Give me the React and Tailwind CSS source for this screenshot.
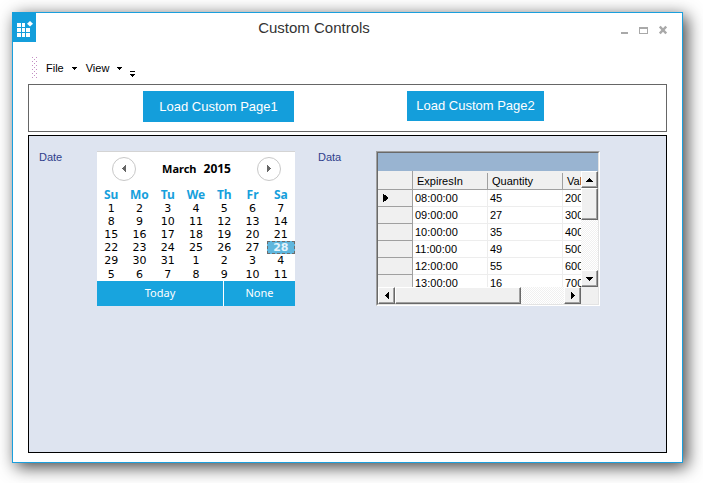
import React from "react";

const DAYS = ["Su", "Mo", "Tu", "We", "Th", "Fr", "Sa"];
const WEEKS = [
  [1, 2, 3, 4, 5, 6, 7],
  [8, 9, 10, 11, 12, 13, 14],
  [15, 16, 17, 18, 19, 20, 21],
  [22, 23, 24, 25, 26, 27, 28],
  [29, 30, 31, 1, 2, 3, 4],
  [5, 6, 7, 8, 9, 10, 11],
];
const ROWS = [
  ["08:00:00", 45, 200],
  ["09:00:00", 27, 300],
  ["10:00:00", 35, 400],
  ["11:00:00", 49, 500],
  ["12:00:00", 55, 600],
  ["13:00:00", 16, 700],
];

function Logo() {
  return (
    <svg viewBox="0 0 24 30" className="block h-[30px] w-6 shrink-0 bg-[#149edb]" aria-hidden="true">
      <g fill="#fff">
        <path d="M5 11h4v4H5zM10 11h3v4h-3zM5 16h4v4H5zM10 16h3v4h-3zM14 16h4v4h-4zM5 21h4v4H5zM10 21h3v4h-3zM14 21h4v4h-4z" />
        <path d="M18 9l3 2.8-3 2.8-3-2.8z" />
      </g>
    </svg>
  );
}

function WindowButtons() {
  return (
    <div className="flex h-[34px] items-center gap-[11px] pr-2 pt-px text-[#a9a9a9]">
      <button aria-label="Minimize" className="h-3 w-[7px]">
        <svg viewBox="0 0 7 12" className="block h-3 w-[7px]" shapeRendering="crispEdges"><path fill="currentColor" d="M0 8h7v2H0z" /></svg>
      </button>
      <button aria-label="Maximize" className="h-3 w-[9px]">
        <svg viewBox="0 0 9 12" className="block h-3 w-[9px]" shapeRendering="crispEdges"><path fill="currentColor" fillRule="evenodd" d="M0 3h9v7H0zM1 5v4h7V5z" /></svg>
      </button>
      <button aria-label="Close" className="h-3 w-2">
        <svg viewBox="0 0 8 12" className="block h-3 w-2"><path stroke="currentColor" strokeWidth="2.4" d="M.8 2.5l6.4 7M7.2 2.5l-6.4 7" /></svg>
      </button>
    </div>
  );
}

function Grip() {
  return (
    <svg className="h-[22px] w-[6px]" aria-hidden="true" shapeRendering="crispEdges">
      <defs>
        <pattern id="grip" width="4" height="4" patternUnits="userSpaceOnUse">
          <path fill="#c48fc4" d="M0 0h1v1H0zM2 2h1v1H2z" />
        </pattern>
      </defs>
      <rect width="6" height="22" fill="url(#grip)" />
    </svg>
  );
}

function MenuButton({ children }) {
  return (
    <button className="flex items-center gap-2 text-[11px] leading-4 text-black">
      {children}
      <svg viewBox="0 0 5 3" className="h-[3px] w-[5px]" shapeRendering="crispEdges"><path d="M0 0h5v1H0zM1 1h3v1H1zM2 2h1v1H2z" /></svg>
    </button>
  );
}

function Arrow({ d }) {
  return (
    <svg viewBox="0 0 8 8" className="block h-2 w-2" aria-hidden="true" shapeRendering="crispEdges">
      <path d={d} fill="currentColor" />
    </svg>
  );
}

const LEFT = "M5 0h1v7H5zM4 1h1v5H4zM3 2h1v3H3zM2 3h1v1H2z";
const RIGHT = "M2 0h1v7H2zM3 1h1v5H3zM4 2h1v3H4zM5 3h1v1H5z";
const UP = "M0 5h7v1H0zM1 4h5v1H1zM2 3h3v1H2zM3 2h1v1H3z";
const DOWN = "M0 2h7v1H0zM1 3h5v1H1zM2 4h3v1H2zM3 5h1v1H3z";

function Calendar() {
  return (
    <div className="flex w-[198px] flex-col border-t border-[#d4d4d4] bg-white">
      <div className="flex h-[35px] items-center justify-between pl-[15px] pr-[14px] pb-[2px]">
        <button aria-label="Previous month" className="flex size-6 items-center justify-center rounded-full border border-[#c8c8c8] text-[#666]"><Arrow d={LEFT} /></button>
        <div className="flex items-baseline gap-[7px] font-['Noto_Sans',sans-serif] font-bold leading-4 text-black">
          <span className="text-[11px]">March</span>
          <span className="text-[12px]">2015</span>
        </div>
        <button aria-label="Next month" className="flex size-6 items-center justify-center rounded-full border border-[#c8c8c8] text-[#666]"><Arrow d={RIGHT} /></button>
      </div>
      <table aria-label="March 2015" className="w-full table-fixed border-collapse text-center">
        <thead>
          <tr className="h-[15px]">
            {DAYS.map((d) => (
              <th key={d} scope="col" className="p-0 font-['Noto_Sans',sans-serif] text-[12px] font-bold leading-[15px] text-[#16a0dc]">{d}</th>
            ))}
          </tr>
        </thead>
        <tbody className="font-['DejaVu_Sans',sans-serif] text-[11px] leading-[13px] text-black">
          {WEEKS.map((week, i) => (
            <tr key={i} className="h-[13px] last:h-[14px]">
              {week.map((n) =>
                n === 28 ? (
                  <td key={n} aria-selected="true" className="bg-[#5fb6dd] p-0 font-bold text-[#e6f4fb] outline-1 -outline-offset-1 outline-dashed outline-[#6d6d6d]">{n}</td>
                ) : (
                  <td key={n} className="p-0 align-bottom">{n}</td>
                )
              )}
            </tr>
          ))}
        </tbody>
      </table>
      <div className="flex h-[25px] gap-px font-['Noto_Sans',sans-serif] text-[11px] text-white">
        <button className="w-[126px] bg-[#18a4de]">Today</button>
        <button className="flex-1 bg-[#18a4de]">None</button>
      </div>
    </div>
  );
}

const raised = "border border-t-white border-l-white border-r-[#696969] border-b-[#696969] bg-[#f0f0f0] shadow-[inset_-1px_-1px_#a0a0a0]";
const track = "bg-[repeating-conic-gradient(#f0f0f0_0_25%,#fff_0_50%)] bg-[length:2px_2px]";

function ScrollButton({ label, d }) {
  return (
    <button aria-label={label} className={`flex size-[17px] shrink-0 items-center justify-center text-black ${raised}`}>
      <Arrow d={d} />
    </button>
  );
}

function DataGrid() {
  const head = "h-[19px] border-b border-[#a0a0a0] bg-[#f0f0f0] p-0 pt-px text-left font-normal";
  const cell = "h-[17px] border-b border-r border-[#ededed] bg-white px-[2px] pb-0 pt-px leading-[15px]";
  return (
    <div className="w-[224px] border border-t-[#a0a0a0] border-l-[#a0a0a0] border-r-white border-b-white">
      <div className="border border-t-[#696969] border-l-[#696969] border-r-[#e3e3e3] border-b-[#e3e3e3] bg-[#f0f0f0]">
        <div className="h-[18px] bg-[#99b4d1]" />
        <div className="flex h-[116px]">
          <div className="min-w-0 flex-1 overflow-hidden">
            <table className="w-[260px] table-fixed border-separate border-spacing-0 text-[11px] leading-4 text-black">
              <colgroup>
                <col className="w-[35px]" />
                <col className="w-[75px]" />
                <col className="w-[75px]" />
                <col className="w-[75px]" />
              </colgroup>
              <thead>
                <tr>
                  <th aria-label="Row" className={`${head} border-r`} />
                  {["ExpiresIn", "Quantity", "Value"].map((h) => (
                    <th key={h} scope="col" className={head}>
                      <span className="block border-r border-[#a0a0a0] pl-1">{h}</span>
                    </th>
                  ))}
                </tr>
              </thead>
              <tbody>
                {ROWS.map((row, i) => (
                  <tr key={row[0]}>
                    <th scope="row" aria-label={`Row ${i + 1}`} className="h-[17px] border-b border-r border-[#a0a0a0] bg-[#f0f0f0] py-0 pl-1">
                      {i === 0 && <Arrow d="M1 0h1v8H1zM2 1h1v6H2zM3 1h1v6H3zM4 2h1v4H4zM5 3h1v2H5z" />}
                    </th>
                    {row.map((v, j) => (
                      <td key={j} className={cell}>{v}</td>
                    ))}
                  </tr>
                ))}
              </tbody>
            </table>
          </div>
          <div className={`flex w-[17px] flex-col ${track}`}>
            <ScrollButton label="Scroll up" d={UP} />
            <div className={`h-8 ${raised}`} />
            <div className="flex-1" />
            <ScrollButton label="Scroll down" d={DOWN} />
          </div>
        </div>
        <div className="flex h-[17px]">
          <div className={`flex flex-1 ${track}`}>
            <ScrollButton label="Scroll left" d={LEFT} />
            <div className={`w-[126px] ${raised}`} />
            <div className="flex-1" />
            <ScrollButton label="Scroll right" d={RIGHT} />
          </div>
          <div className="w-[17px] bg-[#f0f0f0]" />
        </div>
      </div>
    </div>
  );
}

export default function App() {
  return (
    <div className="flex min-h-screen flex-col bg-white pb-5 pl-3 pr-5 pt-3 font-['Liberation_Sans',Arial,sans-serif]">
      <div className="flex flex-1 flex-col bg-white shadow-[4px_4px_16px_rgba(0,0,0,0.75)]">
        <div className="flex flex-1 flex-col border border-[#1a9fdd]">
          <header className="-ml-px -mt-px flex h-[34px] items-start pr-[7px]">
            <Logo />
            <h1 className="flex-1 pr-[29px] text-center text-[15px] leading-8 text-[#333]">Custom Controls</h1>
            <WindowButtons />
          </header>
          <nav className="flex h-[38px] items-center pl-[19px] pt-[6px]">
            <Grip />
            <div className="flex items-center gap-[9px] pl-2">
              <MenuButton>File</MenuButton>
              <MenuButton>View</MenuButton>
            </div>
            <button aria-label="Toolbar options" className="ml-2 mt-3">
              <svg viewBox="0 0 5 6" className="block h-[6px] w-[5px]" shapeRendering="crispEdges"><path d="M0 0h5v1H0zM0 3h5v1H0zM1 4h3v1H1zM2 5h1v1H2z" /></svg>
            </button>
          </nav>
          <main className="flex flex-1 flex-col gap-[3px] px-[15px] pb-[9px]">
            <div className="flex h-12 items-start gap-[113px] border border-[#666] pl-[114px] pt-[6px] text-[13px] text-white">
              <button className="h-[31px] w-[151px] bg-[#149edb]">Load Custom Page1</button>
              <button className="h-[30px] w-[137px] bg-[#149edb]">Load Custom Page2</button>
            </div>
            <section className="flex flex-1 items-start border border-black bg-[#dee4f0] pl-[10px] pt-[15px]">
              <span className="w-[58px] text-[11px] leading-3 text-[#2f3f8c]">Date</span>
              <Calendar />
              <span className="ml-[23px] w-[58px] text-[11px] leading-3 text-[#2f3f8c]">Data</span>
              <DataGrid />
            </section>
          </main>
        </div>
      </div>
    </div>
  );
}
